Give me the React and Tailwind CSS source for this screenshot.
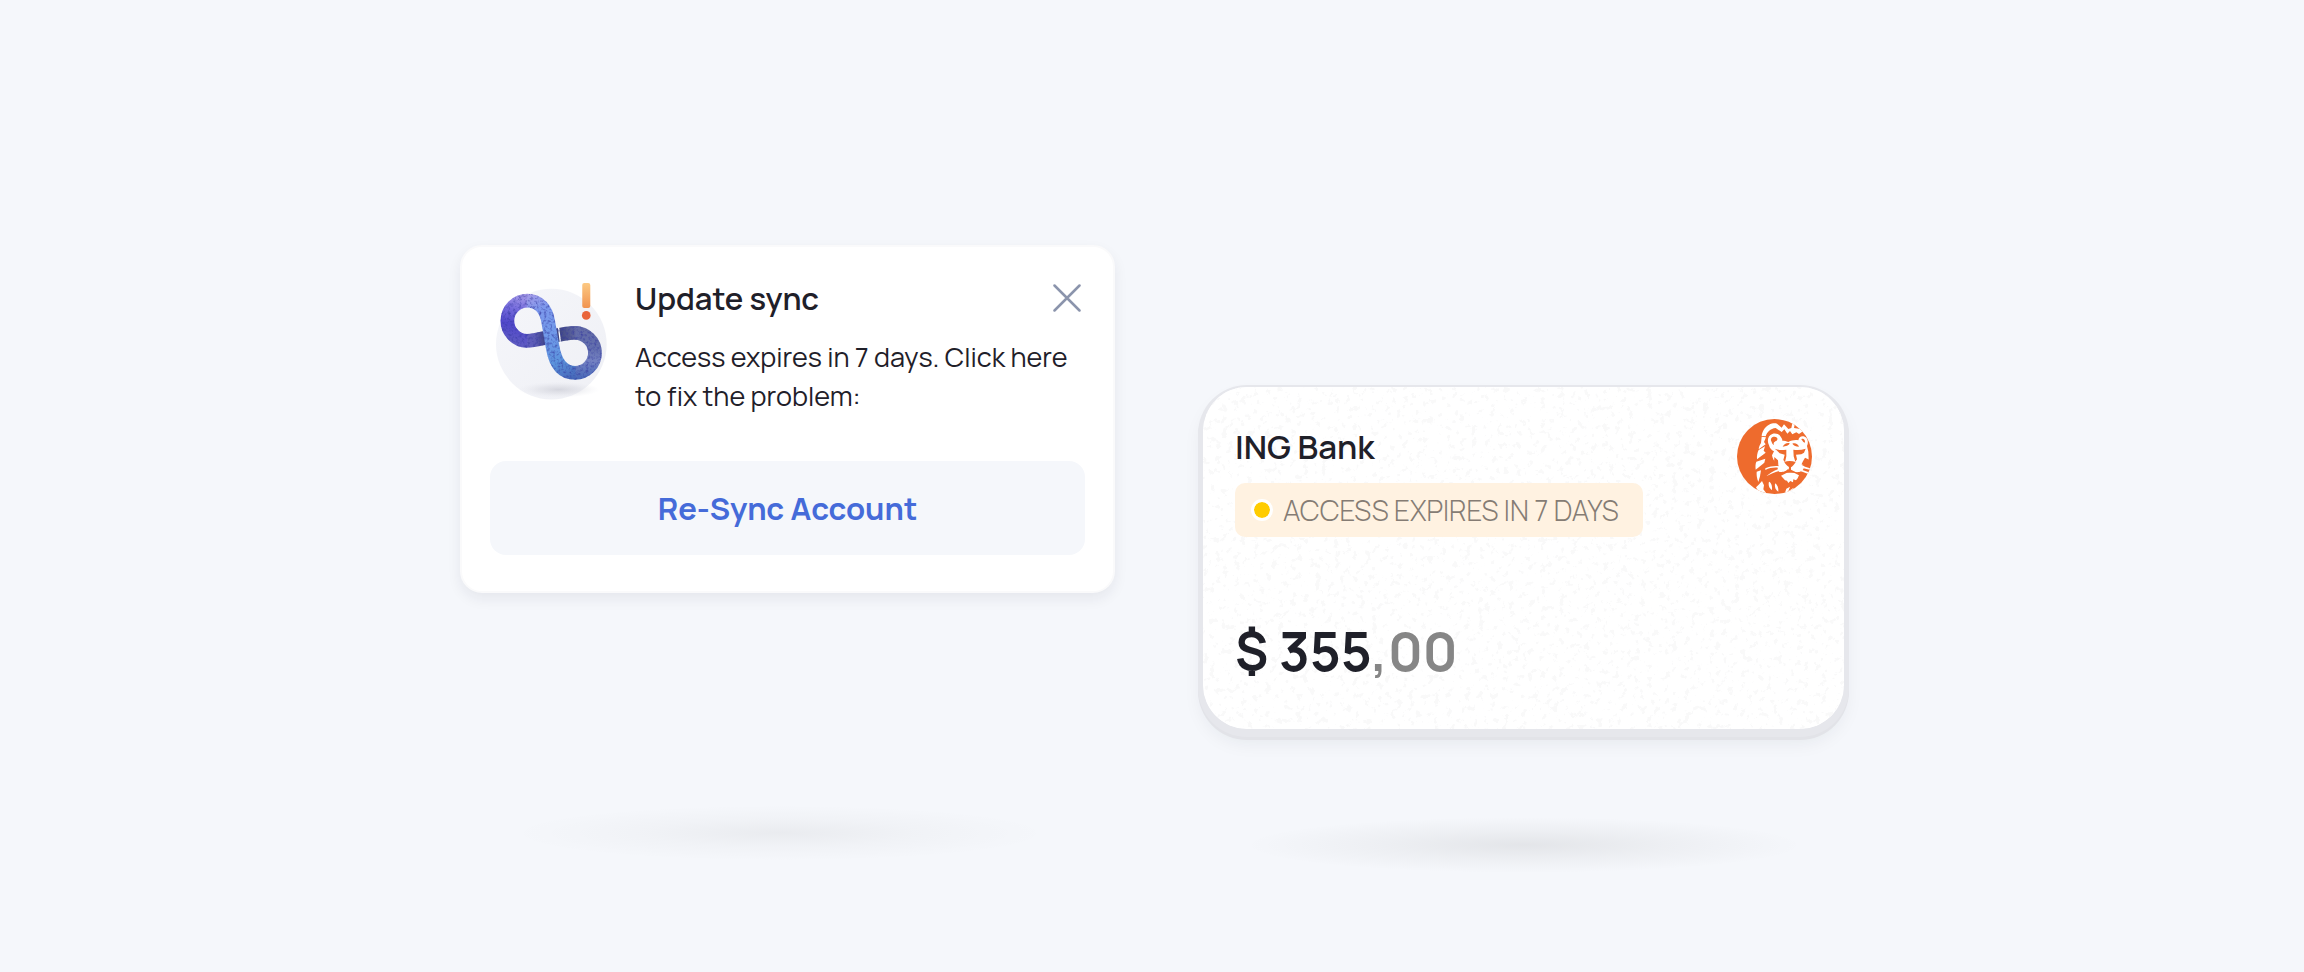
function SyncLogo() {
  return (
    <svg viewBox="48 39 332 350" className="w-[111px] shrink-0" aria-hidden="true">
      <defs>
        <linearGradient id="disc" x1="0" y1="0" x2="1" y2="1">
          <stop offset="0" stopColor="#f5f6fa" />
          <stop offset="1" stopColor="#eff0f5" />
        </linearGradient>
        <radialGradient id="floor">
          <stop offset="0" stopColor="#c9cad4" stopOpacity="0.7" />
          <stop offset="0.5" stopColor="#d4d5dd" stopOpacity="0.4" />
          <stop offset="1" stopColor="#e4e5ec" stopOpacity="0" />
        </radialGradient>
        <linearGradient id="over" gradientUnits="userSpaceOnUse" x1="140" y1="72" x2="270" y2="328">
          <stop offset="0" stopColor="#a79be8" />
          <stop offset="0.2" stopColor="#7d98ec" />
          <stop offset="0.5" stopColor="#7099e9" />
          <stop offset="0.78" stopColor="#5b93dc" />
          <stop offset="1" stopColor="#4567b8" />
        </linearGradient>
        <linearGradient id="leftLoop" gradientUnits="userSpaceOnUse" x1="140" y1="72" x2="105" y2="230">
          <stop offset="0" stopColor="#aca0ea" />
          <stop offset="0.3" stopColor="#776ddd" />
          <stop offset="0.6" stopColor="#5047ca" />
          <stop offset="1" stopColor="#625fc2" />
        </linearGradient>
        <linearGradient id="under" gradientUnits="userSpaceOnUse" x1="135" y1="210" x2="300" y2="188">
          <stop offset="0" stopColor="#625fc2" />
          <stop offset="0.2" stopColor="#5b5bb2" />
          <stop offset="0.4" stopColor="#383d7c" />
          <stop offset="0.65" stopColor="#434a84" />
          <stop offset="1" stopColor="#6870aa" />
        </linearGradient>
        <linearGradient id="rightLoop" gradientUnits="userSpaceOnUse" x1="290" y1="170" x2="290" y2="328">
          <stop offset="0" stopColor="#636ba5" />
          <stop offset="0.4" stopColor="#626eae" />
          <stop offset="0.65" stopColor="#7482c2" />
          <stop offset="1" stopColor="#4567b8" />
        </linearGradient>
        <linearGradient id="bang" x1="0" y1="0" x2="0" y2="1">
          <stop offset="0" stopColor="#fcc983" />
          <stop offset="1" stopColor="#f19350" />
        </linearGradient>
        <filter id="grain" x="-0.25" y="-0.25" width="1.5" height="1.5" colorInterpolationFilters="sRGB">
          <feTurbulence type="fractalNoise" baseFrequency="0.12" numOctaves="3" seed="4" />
          <feColorMatrix values="0 0 0 0 0.2  0 0 0 0 0.22  0 0 0 0 0.62  0 0 0 1.6 -0.72" />
          <feComposite in2="SourceGraphic" operator="in" result="n" />
          <feMerge>
            <feMergeNode in="SourceGraphic" />
            <feMergeNode in="n" />
          </feMerge>
        </filter>
      </defs>
      <circle cx="213.500" cy="222" r="165.500" fill="url(#disc)" />
      <ellipse cx="235" cy="358" rx="122" ry="24" fill="url(#floor)" />
      <g filter="url(#grain)" fill="none" strokeWidth="41">
        <path d="M283 188 A60 60 0 0 1 344 248 A60 60 0 0 1 283 308" stroke="url(#rightLoop)" />
        <path d="M139 212 C180 212 240 187 286 188" stroke="url(#under)" />
        <path d="M235 172 L241 218" stroke="#fff" strokeWidth="4" />
        <path d="M142 92 A60 60 0 0 0 82 152 A60 60 0 0 0 141 212" stroke="url(#leftLoop)" />
        <path d="M140 92 C178 92 198 118 204 154 L217 229 C224 273 242 308 286 308" stroke="url(#over)" />
      </g>
      <rect x="306" y="39" width="24" height="75" rx="6" fill="url(#bang)" />
      <circle cx="318" cy="136" r="13" fill="#e9653b" />
    </svg>
  );
}

function LionLogo() {
  return (
    <svg viewBox="52 41 225 225" className="size-[75px] shrink-0" role="img" aria-label="ING">
      <defs>
        <clipPath id="round">
          <circle cx="164.500" cy="153.500" r="112.500" />
        </clipPath>
      </defs>
      <g clipPath="url(#round)">
        <rect x="52" y="41" width="225" height="225" fill="#ee6b2d" />
        <g fill="#fff">
          <path d="M126 92 C128 78 134 66 148 58 C156 54 166 53 172 55 L186 67 L193 57 L206 71 L215 68 L218 54 L226 52 L223 68 L238 70 L246 66 L252 76 L238 86 L230 81 L218 87 L211 77 L203 85 L194 72 L186 80 L168 68 C152 70 142 80 138 93 Z" />
          <path d="M126 94 L139 96 L133 110 L138 117 L117 132 C118 124 120 119 124 113 Z" />
          <path d="M117 134 L136 123 L132 136 L138 142 L112 162 C111 152 113 142 117 134 Z" />
          <path d="M110 169 L137 160 L134 172 L108 193 C107 184 107 176 110 169 Z" />
          <path d="M111 199 L124 195 L121 213 L116 230 C112 220 110 209 111 199 Z" />
          <path d="M117 238 L127 227 L133 240 L131 252 L140 264 L118 262 L109 246 Z" />
          <path d="M148 229 C154 231 158 240 157 254 C149 249 145 240 148 229 Z" />
          <path d="M166 234 C173 238 177 247 176 259 C168 255 164 246 166 234 Z" />
          <path d="M200 250 L211 244 L206 258 L222 247 L219 256 L194 268 Z" />
          <path d="M148 120 C141 106 145 90 158 86 C168 82 181 87 184 96 C187 100 188 103 188 106 C194 106 200 107 206 110 C216 105 226 103 236 105 C238 92 252 89 261 99 C267 108 264 118 262 122 L266 139 L267 163 C260 172 252 177 245 178 L254 183 C250 199 242 200 232 201 L213 198 L205 191 C197 200 187 200 179 200 C174 195 172 187 177 180 L170 174 C163 168 158 158 157 150 L163 138 C155 134 150 128 148 120 Z" />
          <path d="M137 189 C150 183 163 181 175 182 L175 187 C160 186 150 188 137 194 Z" />
          <path d="M140 213 C149 204 162 196 176 191 L178 197 C165 201 152 206 140 213 Z" />
          <path d="M249 182 L276 190 L276 195 L248 188 Z" />
          <path d="M246 193 L272 202 L268 207 L244 198 Z" />
          <path d="M184 211 L202 202 L223 202 L238 210 L234 219 L229 225 L221 222 L220 231 L212 227 L206 233 L202 226 L196 225 L190 218 Z" />
        </g>
        <g fill="#ee6b2d">
          <path d="M155 108 C151 99 158 93 165 94 C173 95 176 101 171 106 C164 109 160 111 163 120 C159 118 157 114 155 108 Z" />
          <path d="M245 102 C250 98 257 103 256 112 L251 110 Z" />
          <path d="M189 124 C193 116 202 111 210 114 C208 121 198 123 189 124 Z" />
          <path d="M218 115 C227 112 235 116 238 124 C229 123 222 121 218 115 Z" />
          <path d="M165 130 C176 135 188 134 200 133 L200 153 L196 171 L191 164 L195 148 L180 144 L170 134 Z" />
          <path d="M221 133 C234 135 246 134 258 130 L253 142 L245 147 L229 148 L232 162 L227 169 L222 153 Z" />
          <path d="M194 170 C203 166 217 166 228 170 C224 178 218 183 214 186 L214 193 L232 202 L226 203 L212 199 L196 203 L190 202 L207 193 L208 185 C202 181 197 176 194 170 Z" />
          <path d="M164 155 L175 165 L176 178 L163 178 Z" />
          <path d="M256 157 L250 168 L246 176 L262 181 L272 165 Z" />
        </g>
      </g>
    </svg>
  );
}

function Grain() {
  return (
    <svg className="pointer-events-none absolute inset-0 size-full" aria-hidden="true">
      <filter id="paper" x="0" y="0" width="1" height="1" colorInterpolationFilters="sRGB">
        <feTurbulence type="fractalNoise" baseFrequency="0.16" numOctaves="4" seed="9" />
        <feColorMatrix values="0 0 0 0 0.975  0 0 0 0 0.975  0 0 0 0 0.978  14 0 0 0 -8.5" />
      </filter>
      <rect width="100%" height="100%" filter="url(#paper)" />
    </svg>
  );
}

function SyncCard() {
  return (
    <section className="flex min-h-[348px] flex-col rounded-[22px] border-2 border-[#fafafb] bg-white px-7 pt-6 pb-9 shadow-[0_6px_14px_rgba(30,32,50,0.07)]">
      <div className="flex items-start gap-7 pl-1.5">
        <div className="pt-3">
          <SyncLogo />
        </div>
        <div className="min-w-0 flex-1 pt-2">
          <div className="flex items-center justify-between pr-1">
            <h2 className="text-[31px] leading-[38px] font-semibold text-[#1f2029]">Update sync</h2>
            <button type="button" aria-label="Close" className="text-[#8b94ac]">
              <svg viewBox="0 0 28 28" className="size-7" fill="none" stroke="currentColor" strokeWidth="2.500" strokeLinecap="round">
                <path d="M1.500 1.500 26.500 26.500M26.500 1.500 1.500 26.500" />
              </svg>
            </button>
          </div>
          <p className="mt-5 text-[27px] leading-[39px] font-normal text-[#1f2029]">
            Access expires in 7 days. Click here
            <br />
            to fix the problem:
          </p>
        </div>
      </div>
      <button type="button" className="mt-auto h-[94px] w-full rounded-2xl bg-[#f5f7fb] text-[31px] font-bold text-[#456bd9]">
        Re-Sync Account
      </button>
    </section>
  );
}

function BankCard() {
  return (
    <section className="relative flex min-h-[342px] flex-col overflow-hidden rounded-[44px] bg-white px-8 pt-8 pb-[26px]">
      <Grain />
      <div className="relative flex items-start justify-between">
        <div>
          <h2 className="mt-2 text-[33px] leading-[40px] font-semibold text-[#1f2029]">ING Bank</h2>
          <p className="mt-4 flex h-[54px] items-center gap-2.5 rounded-[10px] bg-[#fff2e1] pr-6 pl-4 text-[28px] font-light text-[#857c74]">
            <span className="size-[22px] rounded-full border-[3px] border-white bg-[#ffcc00] bg-clip-padding" />
            ACCESS EXPIRES IN 7 DAYS
          </p>
        </div>
        <LionLogo />
      </div>
      <p className="relative mt-auto text-[53px] leading-[104px] font-bold text-[#1f2029]">
        $ 355<span className="text-[#868686]">,00</span>
      </p>
    </section>
  );
}

export default function App() {
  return (
    <main className="flex min-h-screen items-start justify-center gap-[88px] bg-[#f5f7fb] px-10 font-['Manrope','Inter',sans-serif]">
      <div className="flex max-w-[655px] flex-1 flex-col pt-[245px]">
        <SyncCard />
        <div className="mt-[212px] mr-4 h-14 w-[540px] self-center bg-[radial-gradient(closest-side,rgba(20,20,20,0.05),rgba(20,20,20,0.02)_50%,transparent)]" />
      </div>
      <div className="flex max-w-[641px] flex-1 flex-col pt-[387px]">
        <div className="rounded-[44px] shadow-[0_3px_0_5px_#e6e7ec,0_6px_0_5px_#e2e3e8,0_12px_20px_rgba(30,32,50,0.08)]">
          <BankCard />
        </div>
        <div className="mt-[88px] h-14 w-[560px] self-center bg-[radial-gradient(closest-side,rgba(20,20,20,0.08),rgba(20,20,20,0.035)_50%,transparent)]" />
      </div>
    </main>
  );
}
